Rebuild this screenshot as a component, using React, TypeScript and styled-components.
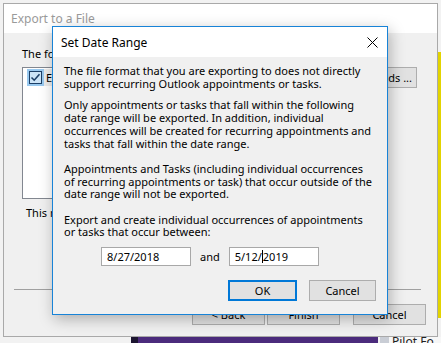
import React from 'react';
import styled, { createGlobalStyle } from 'styled-components';

const GlobalStyle = createGlobalStyle`
  html, body {
    margin: 0;
    padding: 0;
    width: 441px;
    height: 343px;
    overflow: hidden;
    background: #ececec;
  }
  body {
    font-family: "Segoe UI", "Noto Sans", "Open Sans", sans-serif;
    font-size: 11px;
    color: #000;
  }
`;

const Desktop = styled.div`
  position: relative;
  width: 441px;
  height: 343px;
  overflow: hidden;
  background: #f2f2f2;
  padding: 3px 3px 0 3px;
  box-sizing: border-box;
`;

const DesktopStrip = styled.div<{ $x: number; $y: number; $w: number; $h: number; $bg: string }>`
  position: absolute;
  left: ${p => p.$x}px;
  top: ${p => p.$y}px;
  width: ${p => p.$w}px;
  height: ${p => p.$h}px;
  background: ${p => p.$bg};
`;

const TaskLabel = styled.div`
  position: absolute;
  left: 392px;
  top: 335px;
  font-size: 12px;
  line-height: 14px;
  color: #222;
  white-space: nowrap;
`;

const Window = styled.div`
  position: relative;
  z-index: 1;
  width: 435px;
  height: 334px;
  box-sizing: border-box;
  border: 1px solid #a9a9a9;
  background: #f0f0f0;
  display: flex;
  flex-direction: column;
`;

const WindowTitle = styled.div`
  height: 29px;
  background: #fff;
  padding-left: 7px;
  display: flex;
  align-items: center;
  font-size: 12px;
  color: #9a9a9a;
`;

const WindowBody = styled.div`
  flex: 1;
  display: flex;
  flex-direction: column;
  padding: 14px 10px 0 18px;
`;

const Label = styled.div`
  line-height: 13px;
  white-space: nowrap;
  color: #000;
`;

const ListRow = styled.div`
  display: flex;
  align-items: flex-start;
  gap: 8px;
  margin-top: 7px;
  padding-right: 10px;
`;

const ListBox = styled.div`
  flex: 1;
  height: 132px;
  box-sizing: border-box;
  border: 1px solid #828790;
  background: #fff;
  padding: 1px 4px;
`;

const ListItem = styled.div`
  display: flex;
  align-items: center;
  height: 17px;
  background: #ececec;
  white-space: nowrap;
`;

const CheckCell = styled.div`
  width: 17px;
  height: 17px;
  background: #99c9ef;
  display: flex;
  align-items: center;
  justify-content: center;
  margin-right: 2px;
`;

const CheckBox = styled.div`
  width: 13px;
  height: 13px;
  box-sizing: border-box;
  border: 1px solid #1c3f66;
  background: #cce4f7;
  display: flex;
  align-items: center;
  justify-content: center;
`;

const Button = styled.button<{ $w: number; $default?: boolean }>`
  width: ${p => p.$w}px;
  height: 21px;
  box-sizing: border-box;
  border: ${p => (p.$default ? '2px solid #0078d7' : '1px solid #adadad')};
  background: #e1e1e1;
  font-family: inherit;
  font-size: 11px;
  color: #000;
  padding: 0;
  white-space: nowrap;
  flex-shrink: 0;
`;

const FieldsButton = styled(Button)`
  text-align: right;
  padding-right: 4px;
`;

const Note = styled(Label)`
  margin-top: 7px;
  padding-left: 4px;
`;

const Separator = styled.div`
  height: 1px;
  background: #a0a0a0;
  margin: 70px 6px 0 -8px;
`;

const WizardButtons = styled.div`
  display: flex;
  justify-content: flex-end;
  gap: 2px;
  margin-top: 14px;
  padding-right: 1px;
  & > :last-child {
    margin-left: 11px;
  }
`;

const Dialog = styled.div`
  position: absolute;
  z-index: 2;
  left: 52px;
  top: 26px;
  width: 336px;
  height: 289px;
  box-sizing: border-box;
  border: 1px solid #1883d7;
  background: #f0f0f0;
  box-shadow: 2px 4px 14px rgba(0, 0, 0, 0.28);
  display: flex;
  flex-direction: column;
`;

const DialogTitle = styled.div`
  height: 30px;
  background: #fff;
  display: flex;
  align-items: center;
  justify-content: space-between;
  padding: 0 9px 0 8px;
  font-size: 12px;
`;

const DialogBody = styled.div`
  flex: 1;
  display: flex;
  flex-direction: column;
  padding: 8px 11px 0 11px;
`;

const Paragraph = styled.div<{ $gap?: number }>`
  line-height: 12.7px;
  white-space: nowrap;
  margin-top: ${p => p.$gap ?? 0}px;
`;

const DateRow = styled.div`
  display: flex;
  align-items: center;
  margin: 8px 0 0 37px;
  gap: 9px;
`;

const DateInput = styled.div`
  width: 90px;
  height: 19px;
  box-sizing: border-box;
  border: 1px solid #a8a8a8;
  background: #fff;
  padding-left: 5px;
  display: flex;
  align-items: center;
  white-space: nowrap;
`;

const Caret = styled.span`
  display: inline-block;
  width: 1px;
  height: 13px;
  background: #000;
  vertical-align: middle;
`;

const DialogButtons = styled.div`
  display: flex;
  justify-content: flex-end;
  gap: 12px;
  margin-top: 14px;
`;

const Lines = ({ lines, gap }: { lines: string[]; gap?: number }) => (
  <Paragraph $gap={gap}>
    {lines.map((l, i) => (
      <div key={i}>{l}</div>
    ))}
  </Paragraph>
);

export default function App() {
  return (
    <>
      <GlobalStyle />
      <Desktop>
        <DesktopStrip $x={438} $y={52} $w={3} $h={266} $bg="#e3d400" />
        <DesktopStrip $x={131} $y={337} $w={7} $h={6} $bg="#1c1530" />
        <DesktopStrip $x={138} $y={337} $w={240} $h={6} $bg="#4b2b7c" />
        <DesktopStrip $x={380} $y={337} $w={9} $h={6} $bg="#c9cdd5" />
        <DesktopStrip $x={389} $y={337} $w={52} $h={6} $bg="#f7f7f7" />
        <TaskLabel>Pilot Fo</TaskLabel>

        <Window>
          <WindowTitle>Export to a File</WindowTitle>
          <WindowBody>
            <Label>The following actions will be performed:</Label>
            <ListRow>
              <ListBox>
                <ListItem>
                  <CheckCell>
                    <CheckBox>
                      <svg width="11" height="11" viewBox="0 0 11 11">
                        <path d="M1.5 5.5 L4.2 8.2 L9.5 2.2" fill="none" stroke="#1c3f66" strokeWidth="1.6" />
                      </svg>
                    </CheckBox>
                  </CheckCell>
                  Export "Calendar" from folder: Calendar
                </ListItem>
              </ListBox>
              <FieldsButton $w={130}>Map Custom Fields ...</FieldsButton>
            </ListRow>
            <Note>This may take a few minutes and cannot be canceled.</Note>
            <Separator />
            <WizardButtons>
              <Button $w={73}>&lt; Back</Button>
              <Button $w={73}>Finish</Button>
              <Button $w={73}>Cancel</Button>
            </WizardButtons>
          </WindowBody>
        </Window>

        <Dialog>
          <DialogTitle>
            <span>Set Date Range</span>
            <svg width="11" height="11" viewBox="0 0 11 11">
              <path d="M0.5 0.5 L10.5 10.5 M10.5 0.5 L0.5 10.5" stroke="#000" strokeWidth="1" />
            </svg>
          </DialogTitle>
          <DialogBody>
            <Lines
              lines={[
                'The file format that you are exporting to does not directly',
                'support recurring Outlook appointments or tasks.',
              ]}
            />
            <Lines
              gap={9}
              lines={[
                'Only appointments or tasks that fall within the following',
                'date range will be exported.  In addition, individual',
                'occurrences will be created for recurring appointments and',
                'tasks that fall within the date range.',
              ]}
            />
            <Lines
              gap={12.7}
              lines={[
                'Appointments and Tasks (including individual occurrences',
                'of recurring appointments or task) that occur outside of the',
                'date range will not be exported.',
              ]}
            />
            <Lines
              gap={12.7}
              lines={[
                'Export and create individual occurrences of appointments',
                'or tasks that occur between:',
              ]}
            />
            <DateRow>
              <DateInput>8/27/2018</DateInput>
              <span>and</span>
              <DateInput>
                5/12/<Caret />2019
              </DateInput>
            </DateRow>
            <DialogButtons>
              <Button $w={69} $default>OK</Button>
              <Button $w={67}>Cancel</Button>
            </DialogButtons>
          </DialogBody>
        </Dialog>
      </Desktop>
    </>
  );
}
